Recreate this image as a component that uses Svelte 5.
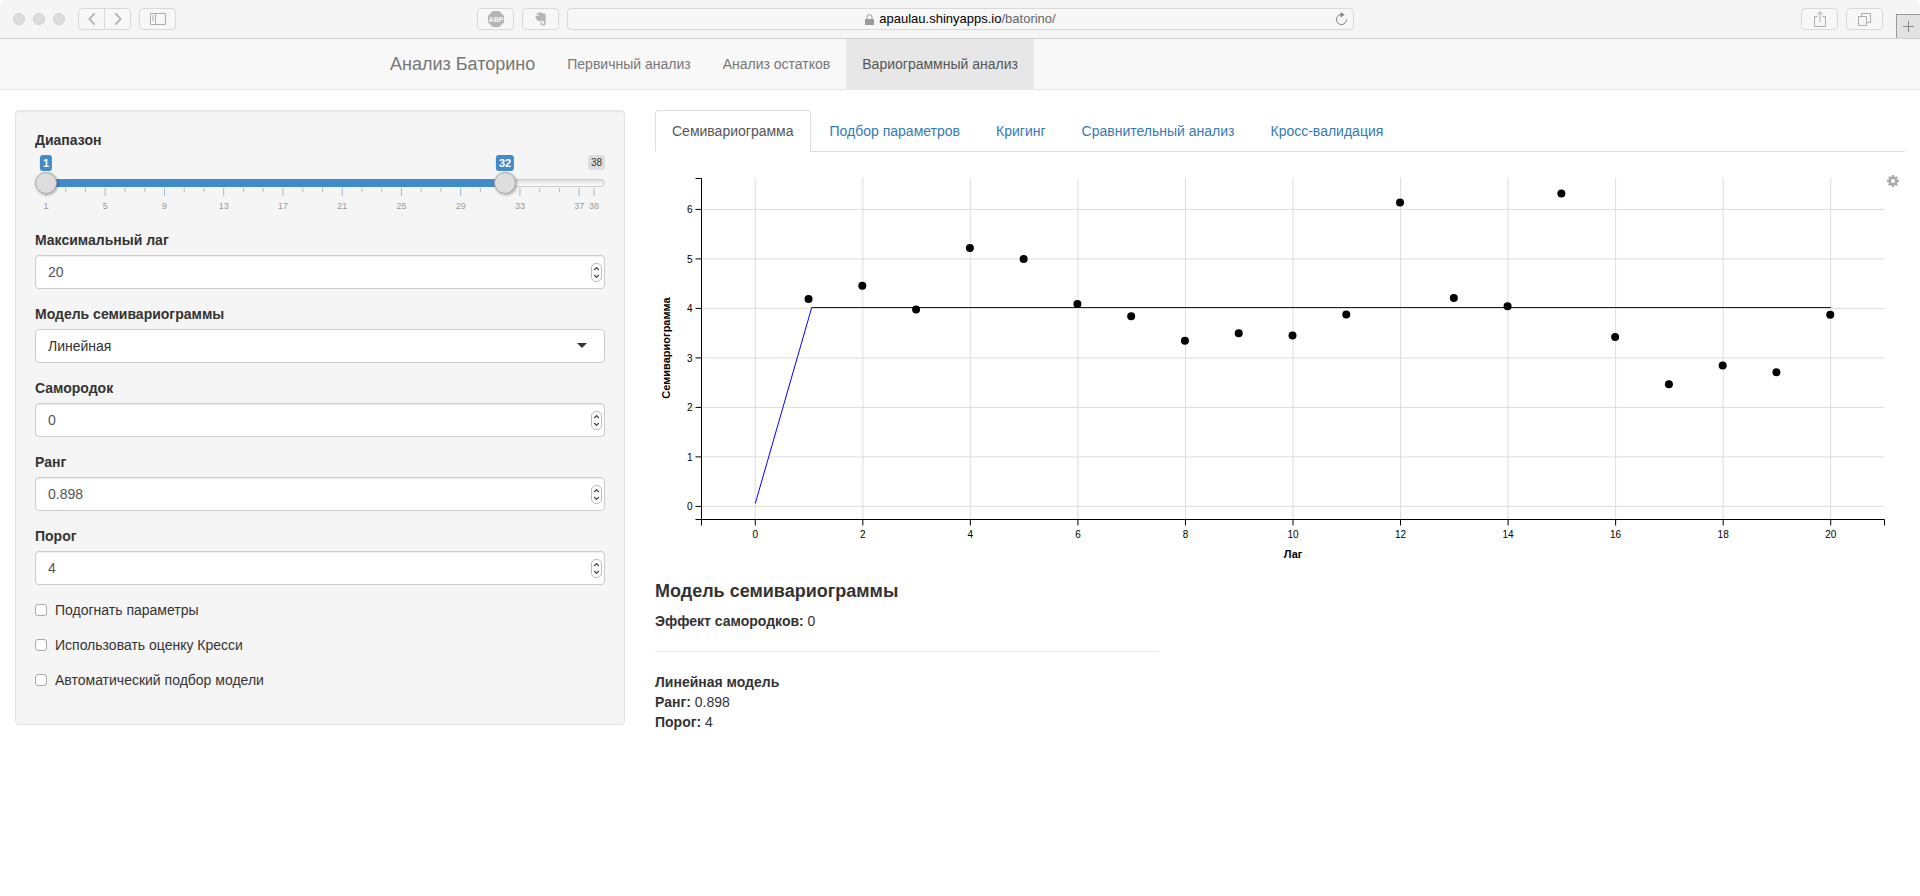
<script>
  let low = $state(1);
  let high = $state(32);
  const min = 1;
  const max = 38;
  const pct = (v) => ((v - min) / (max - min)) * 100;

  const majors = [1, 5, 9, 13, 17, 21, 25, 29, 33, 37, 38];
  const minors = Array.from({ length: 9 }, (_, i) => [1 + 4 * i + 4 / 3, 1 + 4 * i + 8 / 3]).flat();

  const points = [4.19, 4.46, 3.98, 5.22, 5.0, 4.09, 3.84, 3.345, 3.5, 3.455, 3.875, 6.14, 4.21, 4.045, 6.32, 3.42, 2.47, 2.845, 2.71, 3.87];
  const xTicks = [0, 2, 4, 6, 8, 10, 12, 14, 16, 18, 20];
  const yTicks = [0, 1, 2, 3, 4, 5, 6];

  let chartWidth = $state(1250);
  const left = 46.5;
  const top = 26.5;
  const bottom = 367.5;
  let right = $derived(chartWidth - 20.5);
  let x = $derived((v) => left + ((v + 1) / 22) * (right - left));
  const y = (v) => 354.4 - v * 49.5;

  let values = $state({ lag: '20', nugget: '0', range: '0.898', sill: '4' });
  const step = (id, d) => {
    values[id] = String(+(Number(values[id]) + d).toFixed(3));
  };
</script>

{#snippet numberField(id, label)}
  <div class="group">
    <label for={id}>{label}</label>
    <div class="control">
      <input {id} type="text" inputmode="decimal" bind:value={values[id]} />
      <span class="spin">
        <button type="button" aria-label="Увеличить" onclick={() => step(id, 1)}>
          <svg width="7" height="5" viewBox="0 0 7 5"><path d="M1.2 4 3.5 1.6 5.8 4" /></svg>
        </button>
        <button type="button" aria-label="Уменьшить" onclick={() => step(id, -1)}>
          <svg width="7" height="5" viewBox="0 0 7 5"><path d="M1.2 1 3.5 3.4 5.8 1" /></svg>
        </button>
      </span>
    </div>
  </div>
{/snippet}

<header class="browser">
  <div class="side">
    <div class="lights"><i></i><i></i><i></i></div>
    <div class="pair">
      <button type="button" aria-label="Назад"><svg width="10" height="16" viewBox="0 0 10 16"><path d="M8 1.5 2 8l6 6.500" /></svg></button>
      <button type="button" aria-label="Вперёд"><svg width="10" height="16" viewBox="0 0 10 16"><path d="M2 1.500 8 8l-6 6.500" /></svg></button>
    </div>
    <button type="button" aria-label="Боковая панель">
      <svg width="16" height="12" viewBox="0 0 16 12"><path d="M.5.5h15v11H.5zM5.500.5v11M2 3h2M2 5h2M2 7h2" /></svg>
    </button>
  </div>
  <div class="middle">
    <button type="button" aria-label="Adblock Plus">
      <svg width="16" height="16" viewBox="0 0 16 16"><path class="solid" d="M4.700 0h6.600L16 4.700v6.600L11.300 16H4.700L0 11.300V4.700z" /><text x="8" y="10.500" text-anchor="middle">ABP</text></svg>
    </button>
    <button type="button" aria-label="Evernote">
      <svg width="12" height="14" viewBox="0 0 12 14"><path class="solid" d="M3.400 0C4.600-.2 5.600.3 6 1c1.700 0 3.500.2 4 .8.900 1.300.9 6.200.6 9.200-.2 1.900-1 2.600-2.600 2.600-1.800 0-2.600-.7-2.600-1.900 0-1.200.9-1.900 2.300-1.700v1c-.8 0-1 .3-1 .7 0 .5.500.7 1.200.7.900 0 1.100-.6 1.100-1.600V9c-1.200.3-1.900 0-2.300-.6-.5 1-2.900.9-4 .2C1.300 7.800.7 6 .5 4h2.200c.5 0 .7-.3.7-.8zM2.600.6v2.200c0 .2-.2.300-.4.300H.4z" /></svg>
    </button>
    <div class="address">
      <div class="url">
        <svg width="9" height="11" viewBox="0 0 9 11"><path class="solid" d="M0 5h9v6H0z" /><path d="M2 5.500V3a2.500 2.500 0 0 1 5 0v2.500" /></svg>
        <span>apaulau.shinyapps.io<em>/batorino/</em></span>
      </div>
      <button type="button" class="reload" aria-label="Обновить">
        <svg width="13" height="14" viewBox="0 0 13 14"><path d="M5.800 2.600A5 5 0 1 0 11.500 7.500" /><path class="solid" d="M5.500 0l4 2.700-4 2.700z" /></svg>
      </button>
    </div>
  </div>
  <div class="side end">
    <button type="button" aria-label="Поделиться">
      <svg width="12" height="16" viewBox="0 0 12 16"><path d="M3.500 5.500h-3v10h11v-10h-3M6 11V1M3.500 3.500 6 .8l2.500 2.700" /></svg>
    </button>
    <button type="button" aria-label="Показать вкладки">
      <svg width="13" height="13" viewBox="0 0 13 13"><path d="M.5 3.500h8v9h-8zM3.500 3V.5h9v9H9" /></svg>
    </button>
    <button type="button" class="plus" aria-label="Новая вкладка">
      <svg width="11" height="11" viewBox="0 0 11 11"><path d="M0 5.500h11M5.500 0v11" /></svg>
    </button>
  </div>
</header>

<nav class="navbar">
  <div class="container">
    <a class="brand" href="#top">Анализ Баторино</a>
    <a href="#primary">Первичный анализ</a>
    <a href="#residuals">Анализ остатков</a>
    <a class="active" href="#variogram" aria-current="page">Вариограммный анализ</a>
  </div>
</nav>

<main>
  <div class="sidebar">
    <form class="well">
      <div class="group slider-group">
        <label for="low">Диапазон</label>
        <div class="slider">
          <div class="bubbles">
            <span class="at" style="left: {pct(low)}%">{low}</span>
            <span class="at" style="left: {pct(high)}%">{high}</span>
            <span class="limit">{max}</span>
          </div>
          <div class="rail">
            <div class="line"></div>
            <div class="inner"><div class="bar" style="margin-left: {pct(low)}%; width: {pct(high) - pct(low)}%"></div></div>
            <input id="low" type="range" {min} {max} bind:value={low} />
            <input type="range" aria-label="Верхняя граница диапазона" {min} {max} bind:value={high} />
          </div>
          <svg class="ticks" height="30">
            {#each minors as m}
              <line class="minor" x1="{pct(m)}%" x2="{pct(m)}%" y1="0" y2="4" />
            {/each}
            {#each majors as m}
              <line class="major" x1="{pct(m)}%" x2="{pct(m)}%" y1="0" y2="8" />
              <text x="{pct(m)}%" y="21" text-anchor="middle">{m}</text>
            {/each}
          </svg>
        </div>
      </div>

      {@render numberField('lag', 'Максимальный лаг')}

      <div class="group">
        <label for="model">Модель семивариограммы</label>
        <div class="control">
          <select id="model"><option>Линейная</option></select>
          <i class="caret"></i>
        </div>
      </div>

      {@render numberField('nugget', 'Самородок')}
      {@render numberField('range', 'Ранг')}
      {@render numberField('sill', 'Порог')}

      <div class="checks">
        <label><input type="checkbox" />Подогнать параметры</label>
        <label><input type="checkbox" />Использовать оценку Кресси</label>
        <label><input type="checkbox" />Автоматический подбор модели</label>
      </div>
    </form>
  </div>

  <section class="content">
    <div class="tabs">
      <a class="active" href="#semivariogram" aria-current="true">Семивариограмма</a>
      <a href="#fit">Подбор параметров</a>
      <a href="#kriging">Кригинг</a>
      <a href="#compare">Сравнительный анализ</a>
      <a href="#cross">Кросс-валидация</a>
    </div>

    <div class="plot" bind:clientWidth={chartWidth}>
      <svg width="100%" height="420" role="img" aria-label="Семивариограмма">
        <g class="grid">
          {#each xTicks as t}<line x1={x(t)} x2={x(t)} y1={top - 0.5} y2={bottom} />{/each}
          {#each yTicks as t}<line x1={left} x2={right} y1={y(t)} y2={y(t)} />{/each}
        </g>
        <g class="axis">
          <path d="M{left - 6} {top}H{left}V{bottom}H{left - 6}" />
          <path d="M{left} {bottom + 6}V{bottom}H{right}V{bottom + 6}" />
          {#each xTicks as t}
            <line x1={x(t)} x2={x(t)} y1={bottom} y2={bottom + 6} />
            <text x={x(t)} y={bottom + 18} text-anchor="middle">{t}</text>
          {/each}
          {#each yTicks as t}
            <line x1={left - 6} x2={left} y1={y(t)} y2={y(t)} />
            <text x={left - 9} y={y(t) + 4} text-anchor="end">{t}</text>
          {/each}
        </g>
        <g class="title">
          <text x={(left + right) / 2} y={bottom + 38} text-anchor="middle">Лаг</text>
          <text transform="translate(15 196) rotate(-90)" text-anchor="middle">Семивариограмма</text>
        </g>
        <path class="model" d="M{x(0)} {y(0.06)}L{x(1.05)} 155.500H{x(20)}" />
        {#each points as p, i}<circle cx={x(i + 1) - 0.5} cy={y(p)} r="4" />{/each}
      </svg>
      <button type="button" class="gear" aria-label="Настройки графика">
        <svg width="12" height="12" viewBox="0 0 16 16"><path fill-rule="evenodd" d="M6.700 0h2.600l.4 2.100 1.300.6L12.800 1.500l1.700 1.700-1.200 1.800.6 1.300 2.100.4v2.600l-2.100.4-.6 1.300 1.200 1.800-1.700 1.700-1.800-1.200-1.300.6-.4 2.100H6.700l-.4-2.100-1.300-.6-1.800 1.200-1.700-1.700 1.200-1.800-.6-1.300L0 9.300V6.700l2.100-.4.6-1.300-1.200-1.800 1.700-1.700L5 2.700l1.300-.6zM8 5.300a2.700 2.700 0 1 0 0 5.400 2.700 2.700 0 0 0 0-5.400z" /></svg>
      </button>
    </div>

    <div class="summary">
      <h4>Модель семивариограммы</h4>
      <p><b>Эффект самородков:</b> 0</p>
      <hr />
      <p><b>Линейная модель</b></p>
      <p><b>Ранг:</b> 0.898</p>
      <p><b>Порог:</b> 4</p>
    </div>
  </section>
</main>

<style>
  :global(body) {
    background: #fff;
    color: #333;
    font: 14px/20px "Liberation Sans", Arial, sans-serif;
  }
  :global(*) {
    box-sizing: border-box;
  }
  a {
    text-decoration: none;
  }
  button {
    padding: 0;
    font: inherit;
  }

  .browser {
    display: grid;
    grid-template-columns: 477fr 877fr 566fr;
    align-items: center;
    height: 39px;
    border-bottom: 1px solid #cfcfcf;
    border-radius: 6px 6px 0 0;
    background: #f5f5f5;
  }
  .browser button {
    display: flex;
    align-items: center;
    justify-content: center;
    width: 37px;
    height: 22px;
    border: 1px solid #d9d9d9;
    border-radius: 4px;
    background: #f7f7f7;
  }
  .browser svg {
    fill: none;
    stroke: #adadad;
    stroke-width: 1;
  }
  .browser .solid {
    fill: #b5b5b5;
    stroke: none;
  }
  .browser text {
    fill: #f7f7f7;
    stroke: none;
    font-size: 7px;
    font-weight: bold;
  }
  .side {
    display: flex;
    align-items: center;
    gap: 8px;
    height: 38px;
    padding-left: 13px;
  }
  .side.end {
    justify-content: flex-end;
    padding: 0;
  }
  .lights {
    display: flex;
    gap: 8px;
    margin-right: 5px;
  }
  .lights i {
    width: 12px;
    height: 12px;
    border: 1px solid #d0d0d0;
    border-radius: 50%;
    background: #dcdcdc;
  }
  .pair {
    display: flex;
  }
  .pair button {
    width: 27px;
    border-radius: 4px 0 0 4px;
  }
  .pair button + button {
    margin-left: -1px;
    border-radius: 0 4px 4px 0;
  }
  .pair svg {
    height: 14px;
    stroke-width: 2;
    stroke: #b0b0b0;
  }
  .middle {
    display: flex;
    gap: 8px;
  }
  .address {
    display: flex;
    flex: 1;
    align-items: center;
    height: 22px;
    padding-left: 24px;
    border: 1px solid #d9d9d9;
    border-radius: 4px;
    background: #f7f7f7;
  }
  .url {
    display: flex;
    flex: 1;
    align-items: center;
    justify-content: center;
    gap: 5px;
    color: #000;
    font-size: 13px;
  }
  .url em {
    color: #666;
    font-style: normal;
  }
  .url svg {
    stroke: #9a9a9a;
  }
  .url .solid {
    fill: #9a9a9a;
  }
  .address .reload {
    width: 24px;
    height: 20px;
    border: 0;
    background: none;
  }
  .reload svg {
    stroke: #808080;
  }
  .reload .solid {
    fill: #808080;
  }
  .side .plus {
    align-self: flex-end;
    width: 24px;
    height: 24px;
    margin-left: 5px;
    border: solid #999;
    border-width: 1px 0 0 1px;
    border-radius: 0;
    background: #e2e2e2;
  }
  .plus svg {
    stroke: #888;
  }

  .navbar {
    border-bottom: 1px solid #e7e7e7;
    background: #f8f8f8;
  }
  .container {
    display: flex;
    max-width: 1170px;
    margin: 0 auto;
  }
  .container a {
    padding: 15px 16px;
    color: #777;
  }
  .container .brand {
    padding-left: 15px;
    font-size: 18px;
  }
  .container .active {
    background: #e7e7e7;
    color: #555;
  }

  main {
    display: grid;
    grid-template-columns: minmax(0, 1fr) minmax(0, 2fr);
    padding-top: 20px;
  }
  .sidebar,
  .content {
    padding: 0 15px;
  }
  .well {
    padding: 19px;
    border: 1px solid #e3e3e3;
    border-radius: 4px;
    background: #f5f5f5;
    box-shadow: inset 0 1px 1px rgba(0, 0, 0, 0.05);
  }
  .group {
    margin-bottom: 15px;
  }
  .group > label {
    display: block;
    margin-bottom: 5px;
    font-weight: bold;
  }
  .control {
    position: relative;
  }
  .control input,
  .control select {
    display: block;
    width: 100%;
    height: 34px;
    padding: 6px 12px;
    border: 1px solid #ccc;
    border-radius: 4px;
    background: #fff;
    color: #555;
    font: inherit;
    appearance: none;
  }
  .control input {
    box-shadow: inset 0 1px 1px rgba(0, 0, 0, 0.075);
  }
  .control select {
    color: #333;
  }
  .caret {
    position: absolute;
    top: 14px;
    right: 18px;
    border: 5px solid transparent;
    border-top-color: #333;
    border-bottom: 0;
    pointer-events: none;
  }
  .spin {
    position: absolute;
    top: 8px;
    right: 3px;
    display: flex;
    flex-direction: column;
    width: 11px;
    height: 19px;
    border: 1px solid #bbb;
    border-radius: 5px;
    background: #fff;
  }
  .spin button {
    display: flex;
    flex: 1;
    align-items: center;
    justify-content: center;
    border: 0;
    background: none;
  }
  .spin svg {
    fill: none;
    stroke: #444;
    stroke-width: 1.2;
  }

  .slider-group {
    margin-bottom: 12px;
  }
  .slider {
    display: flex;
    flex-direction: column;
  }
  .bubbles {
    position: relative;
    height: 17px;
    margin: 0 11px;
    font-size: 11px;
    line-height: 16px;
  }
  .bubbles span {
    position: absolute;
    top: 0;
    padding: 0 3px;
    border-radius: 3px;
  }
  .at {
    background: #428bca;
    color: #fff;
    font-weight: bold;
    transform: translateX(-50%);
  }
  .bubbles .limit {
    right: -11px;
    background: #ddd;
    font-size: 10px;
    line-height: 15px;
  }
  .rail {
    position: relative;
    z-index: 1;
    display: grid;
    align-items: center;
    height: 22px;
  }
  .rail > * {
    grid-area: 1 / 1;
  }
  .line {
    height: 8px;
    border: 1px solid #ccc;
    border-radius: 8px;
    background: linear-gradient(#ddd, #fff);
  }
  .inner {
    margin: 0 11px;
  }
  .bar {
    height: 8px;
    background: #428bca;
  }
  .rail input {
    width: 100%;
    height: 22px;
    margin: 0;
    background: none;
    appearance: none;
    pointer-events: none;
  }
  .rail input::-webkit-slider-thumb {
    width: 22px;
    height: 22px;
    border: 1px solid #aaa;
    border-radius: 50%;
    background: #ddd;
    box-shadow: 1px 1px 3px rgba(0, 0, 0, 0.3);
    appearance: none;
    pointer-events: auto;
  }
  .ticks {
    width: auto;
    margin: -6px 11px 0;
    overflow: visible;
  }
  .minor {
    stroke: #bbb;
  }
  .major {
    stroke: #99bddd;
  }
  .ticks text {
    fill: #999;
    font-size: 9px;
  }

  .checks {
    display: flex;
    flex-direction: column;
    gap: 15px;
    padding-bottom: 15px;
  }
  .checks label {
    display: flex;
    align-items: center;
    gap: 8px;
  }
  .checks input {
    width: 12px;
    height: 12px;
    margin: 0;
    border: 1px solid #aaa;
    border-radius: 3px;
    background: #fff;
    appearance: none;
  }
  .checks input:checked {
    background: #428bca;
  }

  .tabs {
    display: flex;
    gap: 2px;
    border-bottom: 1px solid #ddd;
  }
  .tabs a {
    margin-bottom: -1px;
    padding: 10px 16px;
    border: 1px solid transparent;
    border-radius: 4px 4px 0 0;
    color: #337ab7;
  }
  .tabs .active {
    border-color: #ddd #ddd #fff;
    background: #fff;
    color: #555;
  }

  .plot {
    position: relative;
  }
  .plot > svg {
    display: block;
  }
  .grid {
    stroke: #ddd;
  }
  .axis {
    fill: none;
    stroke: #000;
  }
  .axis text {
    fill: #000;
    stroke: none;
    font-size: 10px;
  }
  .title {
    fill: #000;
    font-size: 11px;
    font-weight: bold;
  }
  .model {
    fill: none;
    stroke: #00f;
  }
  .gear {
    position: absolute;
    top: 23px;
    right: 6px;
    display: flex;
    border: 0;
    background: none;
  }
  .gear svg {
    fill: #aaa;
  }

  .summary {
    width: calc((100% + 30px) * 5 / 12 - 30px);
  }
  h4 {
    margin: 10px 0;
    font-size: 18px;
    font-weight: bold;
    line-height: 19px;
  }
  p {
    margin: 0;
  }
  hr {
    margin: 20px 0;
    border: 0;
    border-top: 1px solid #eee;
  }
</style>
